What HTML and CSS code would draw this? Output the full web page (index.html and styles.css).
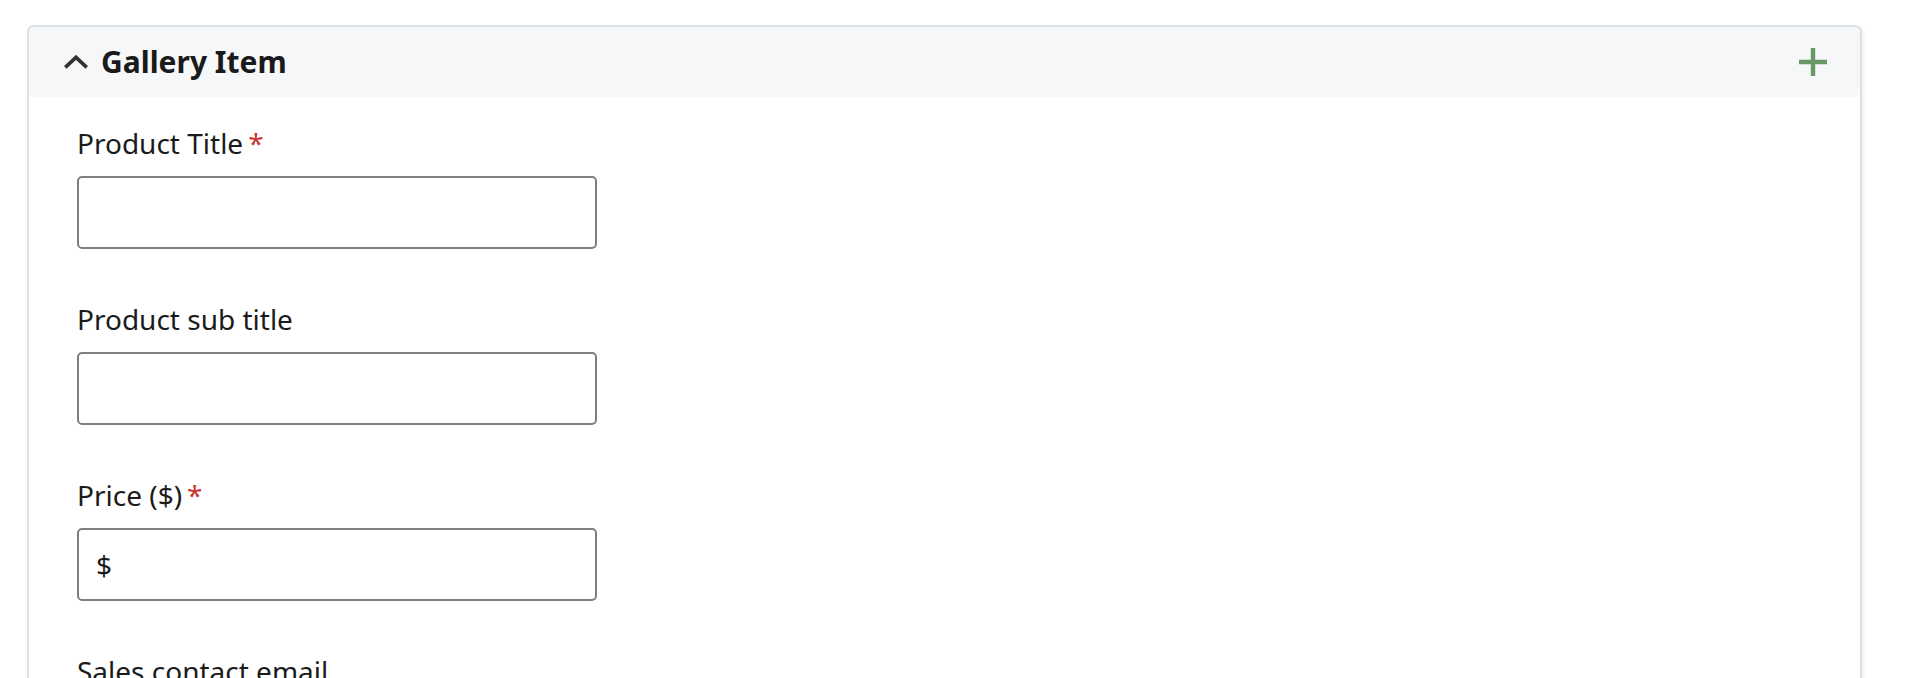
FILE: index.html
```html
<!DOCTYPE html>
<html lang="en">
<head>
<meta charset="utf-8">
<title>Gallery Item</title>
<link rel="stylesheet" href="styles.css">
</head>
<body>
<section class="card">
  <header class="card-header">
    <button class="toggle" type="button" aria-label="Collapse">
      <svg width="24" height="14" viewBox="0 0 24 14" aria-hidden="true"><path d="M1.2 12.4 L12 2.4 L22.8 12.4" fill="none" stroke="#333" stroke-width="3.8" stroke-linecap="butt" stroke-linejoin="miter"/></svg>
    </button>
    <h2 class="card-title">Gallery Item</h2>
    <button class="add" type="button" aria-label="Add">
      <svg width="28" height="28" viewBox="0 0 28 28" aria-hidden="true"><path d="M14 0 V28 M0 14 H28" fill="none" stroke="#6b9966" stroke-width="4.4"/></svg>
    </button>
  </header>
  <div class="card-body">
    <div class="field">
      <label class="field-label" for="f1">Product Title<span class="req">*</span></label>
      <input class="field-input" id="f1" type="text">
    </div>
    <div class="field">
      <label class="field-label" for="f2">Product sub title</label>
      <input class="field-input" id="f2" type="text">
    </div>
    <div class="field">
      <label class="field-label" for="f3">Price ($)<span class="req">*</span></label>
      <input class="field-input" id="f3" type="text" value="$">
    </div>
    <div class="field">
      <label class="field-label" for="f4">Sales contact email</label>
      <input class="field-input" id="f4" type="text">
    </div>
  </div>
</section>
</body>
</html>
```
FILE: styles.css
```css
html, body {
  margin: 0;
  background: #ffffff;
}
body {
  padding: 25px 66px 0 27px;
  font-family: "Noto Sans", "Open Sans", sans-serif;
  color: #1b1b1b;
  overflow: hidden;
  height: 678px;
  box-sizing: border-box;
}
.card {
  border: 2px solid #dcdfe3;
  border-radius: 7px;
  box-shadow: 1px 2px 4px rgba(0, 0, 0, 0.07);
  background: #fff;
}
.card-header {
  display: flex;
  align-items: center;
  height: 70px;
  background: #f6f7f9;
  border-radius: 6px;
  padding: 0 33px 0 35px;
}
.toggle, .add {
  border: 0;
  background: none;
  padding: 0;
  display: flex;
  cursor: pointer;
}
.toggle {
  margin-right: 13px;
}
.card-title {
  margin: 0;
  font-size: 30px;
  font-weight: 700;
  line-height: 44px;
  color: #1a1a1a;
  flex: 1;
}
.card-body {
  padding: 26px 48px 0;
}
.field {
  margin-bottom: 50px;
}
.field-label {
  display: block;
  font-size: 28px;
  line-height: 40px;
  margin-bottom: 13px;
}
.req {
  color: #c8352e;
  margin-left: 5px;
}
.field-input {
  display: block;
  box-sizing: border-box;
  width: 520px;
  height: 73px;
  border: 2px solid #7f7f83;
  border-radius: 5px;
  padding: 0 17px;
  font-family: "Noto Sans", "Open Sans", sans-serif;
  font-size: 28px;
  color: #1a1a1a;
  background: #fff;
  outline: none;
}
```
